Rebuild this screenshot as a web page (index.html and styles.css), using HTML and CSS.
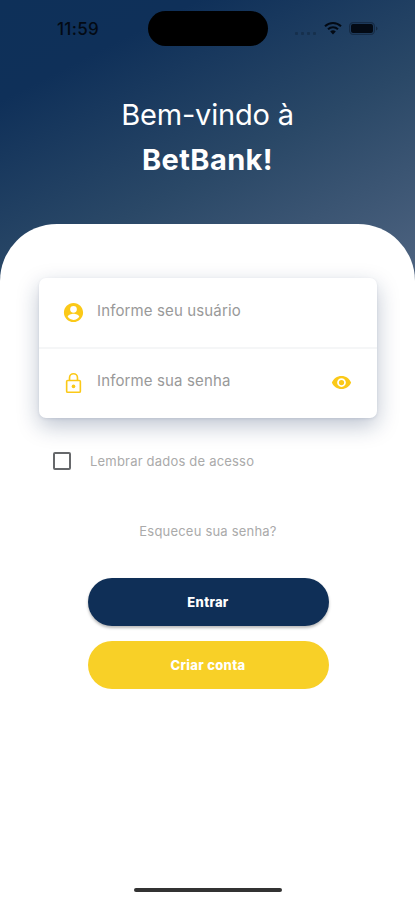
FILE: index.html
```html
<!DOCTYPE html>
<html lang="pt-BR">
<head>
<meta charset="utf-8">
<meta name="viewport" content="width=device-width, initial-scale=1">
<title>BetBank</title>
<link rel="stylesheet" href="styles.css">
</head>

<body>
<div class="screen">

<header class="hero">
  <div class="status-bar">
    <span class="time">11:59</span>
    <span class="island"></span>
    <span class="status-icons">
      <span class="signal"><i></i><i></i><i></i><i></i></span>
      <svg class="wifi" viewBox="0 0 18 14">
        <path d="M1 5.2a11.5 11.5 0 0 1 16 0M4 8.2a7.2 7.2 0 0 1 10 0" fill="none" stroke="currentColor" stroke-width="2"/>
        <path d="M9 13.4L6.2 10.6a4 4 0 0 1 5.6 0z" fill="currentColor"/>
      </svg>
      <svg class="battery" viewBox="0 0 29 13">
        <rect x=".6" y=".6" width="24.8" height="11.8" rx="3.6" fill="none" stroke="currentColor" stroke-opacity=".35" stroke-width="1.2"/>
        <rect x="2" y="2" width="22" height="9" rx="2" fill="currentColor"/>
        <path d="M27 4.5v4q1.5-.6 1.5-2t-1.5-2z" fill="currentColor" fill-opacity=".4"/>
      </svg>
    </span>
  </div>
  <h1 class="welcome"><span class="greeting">Bem-vindo à</span><strong class="brand">BetBank!</strong></h1>
</header>

<main class="sheet">
  <div class="fields">
    <div class="field">
      <svg class="icon" viewBox="0 0 24 24">
        <path d="M12 2C6.48 2 2 6.48 2 12s4.48 10 10 10 10-4.48 10-10S17.52 2 12 2zm0 3.2a3.5 3.5 0 1 1 0 7 3.5 3.5 0 0 1 0-7zm0 14.5c-2.5 0-4.71-1.28-6-3.22.03-1.99 4-3.08 6-3.08s5.97 1.09 6 3.08A7.2 7.2 0 0 1 12 19.7z"/>
      </svg>
      <span class="placeholder user">Informe seu usuário</span>
    </div>
    <div class="field">
      <svg class="icon" viewBox="0 0 24 24">
        <path d="M18 8h-1V6A5 5 0 0 0 7 6v2H6a2 2 0 0 0-2 2v10a2 2 0 0 0 2 2h12a2 2 0 0 0 2-2V10a2 2 0 0 0-2-2zM8.7 6a3.3 3.3 0 0 1 6.6 0v2H8.7zM18.3 20.3H5.7V9.7h12.6z"/>
        <circle cx="12" cy="15" r="1.9"/>
      </svg>
      <span class="placeholder password">Informe sua senha</span>
      <svg class="icon eye" viewBox="0 0 24 24">
        <path d="M12 4.5C7 4.5 2.73 7.61 1 12c1.73 4.39 6 7.5 11 7.5s9.27-3.11 11-7.5c-1.73-4.39-6-7.5-11-7.5zM12 17a5 5 0 1 1 0-10 5 5 0 0 1 0 10zm0-8a3 3 0 1 0 0 6 3 3 0 0 0 0-6z"/>
      </svg>
    </div>
  </div>

  <label class="remember">
    <span class="checkbox"></span>
    <span class="remember-text">Lembrar dados de acesso</span>
  </label>

  <div class="forgot"><span>Esqueceu sua senha?</span></div>

  <div class="actions">
    <button class="btn btn-primary">Entrar</button>
    <button class="btn btn-accent">Criar conta</button>
  </div>

  <div class="home-indicator"></div>
</main>

</div>
</body>
</html>
```

FILE: styles.css
```css
* {
  box-sizing: border-box;
}

body {
  margin: 0;
  font-family: Inter, "Liberation Sans", sans-serif;
  background: #fff;
}

.screen {
  display: flex;
  flex-direction: column;
  height: 900px;
  overflow: hidden;
  background: linear-gradient(153deg, #0e3059 0, #0f3059 90px, #2a4867 250px, #4b617e 420px);
}

.hero {
  flex: none;
  height: 224px;
}

.status-bar {
  display: grid;
  grid-template-columns: 148px 120px 1fr;
  height: 58px;
  padding-top: 11px;
  color: #030a14;
}

.time {
  padding: 8px 0 0 57px;
  font-size: 17px;
  font-weight: 500;
  line-height: 20px;
  letter-spacing: .3px;
}

.island {
  height: 35px;
  border-radius: 18px;
  background: #000;
}

.status-icons {
  display: flex;
  align-items: flex-start;
  padding: 10px 0 0 27px;
}

.signal {
  display: flex;
  gap: 3px;
  width: 29px;
  padding-top: 11px;
}

.signal i {
  width: 3px;
  height: 3px;
  border-radius: 1px;
  background: #030a14;
  opacity: .25;
}

.wifi {
  width: 18px;
  height: 14px;
}

.battery {
  width: 29px;
  height: 13px;
  margin: 1px 0 0 7px;
}

.welcome {
  display: flex;
  flex-direction: column;
  align-items: center;
  margin: 0;
  padding-top: 34px;
  color: #fff;
  font-size: 29px;
  line-height: 45px;
  white-space: nowrap;
}

.greeting {
  font-weight: 400;
  letter-spacing: -.2px;
}

.brand {
  font-weight: 700;
  letter-spacing: .4px;
}

.sheet {
  display: flex;
  flex: 1;
  flex-direction: column;
  padding: 54px 38px 8px 39px;
  border-radius: 57px 57px 0 0;
  background: #fff;
}

.fields {
  height: 140px;
  border-radius: 7px;
  background: #fff;
  box-shadow: 0 8px 22px rgba(15, 40, 85, .27), 0 1px 3px rgba(15, 40, 85, .1);
}

.field {
  display: flex;
  align-items: center;
  height: 69px;
  padding: 0 24px 0 23px;
}

.field + .field {
  height: 70px;
  border-top: 2px solid #f5f6f7;
}

.icon {
  flex: none;
  width: 23px;
  height: 23px;
  fill: #fbc918;
}

.eye {
  margin-left: auto;
  height: 21px;
  margin-bottom: 2px;
}

.placeholder {
  padding: 0 0 5px 12px;
  color: #999;
  font-size: 15px;
  letter-spacing: .13px;
}

.remember {
  display: flex;
  align-items: center;
  height: 20px;
  margin-top: 33px;
  padding-left: 14px;
}

.checkbox {
  width: 18px;
  height: 18px;
  border: 2px solid #66686b;
  border-radius: 2px;
}

.remember-text {
  padding-left: 19px;
  color: #aaa;
  font-size: 13px;
  letter-spacing: .2px;
}

.forgot {
  margin-top: 50px;
  color: #aaa;
  font-size: 13px;
  line-height: 20px;
  letter-spacing: .2px;
  text-align: center;
}

.actions {
  display: flex;
  flex-direction: column;
  align-items: center;
  gap: 15px;
  margin-top: 37px;
}

.btn {
  width: 241px;
  height: 48px;
  padding: 0;
  border: 0;
  border-radius: 24px;
  color: #fff;
  font-family: inherit;
  font-size: 13px;
  font-weight: 800;
  letter-spacing: .3px;
}

.btn-primary {
  background: #0f2f57;
  box-shadow: 0 2px 3px rgba(0, 0, 0, .28);
}

.btn-accent {
  background: #f8d027;
}

.home-indicator {
  align-self: center;
  width: 148px;
  height: 4px;
  margin-top: auto;
  border-radius: 2px;
  background: #333;
}
```
